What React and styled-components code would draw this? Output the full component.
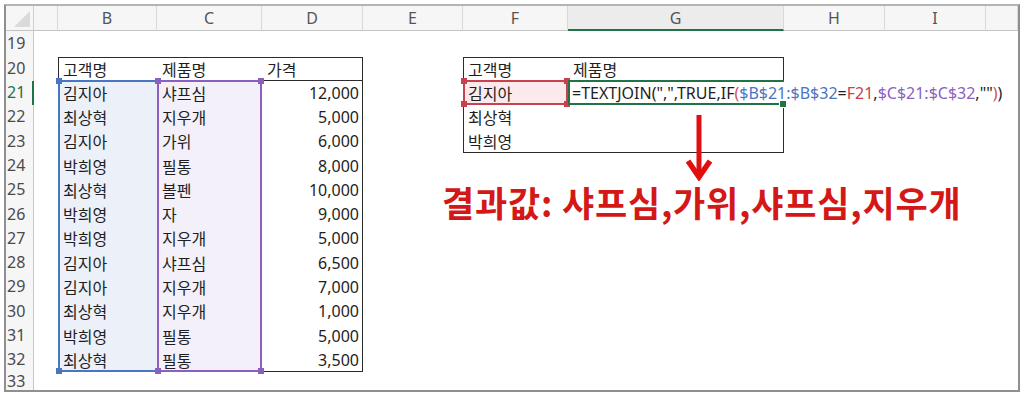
import React from "react";
import styled, { createGlobalStyle } from "styled-components";

const GlobalStyle = createGlobalStyle`
  html, body { margin: 0; padding: 0; background: #ffffff; }
  body { font-family: "Noto Sans CJK KR", "Noto Sans", sans-serif; }
  * { box-sizing: border-box; }
`;

const KR = `"Noto Sans", "Noto Sans CJK KR", sans-serif`;
const KRB = `"Noto Sans CJK KR", "Noto Sans", sans-serif`;
const HEAD = `"Noto Sans", "Open Sans", sans-serif`;

const Frame = styled.div`
  margin: 4px 0 0 4px;
  width: 1016px;
  height: 388px;
  border: 2px solid #8f8f8f;
  border-top-color: #b4b4b4;
  overflow: hidden;
  background: #ffffff;
`;

const Sheet = styled.div`
  position: relative;
  display: grid;
  grid-template-columns: 28px 24px 99px 105px 101px 100px 105px 216px 101px 101px 1fr;
  grid-template-rows: 25px 26px 23.5px repeat(12, 24.3px) 24.3px;
  width: 100%;
`;

const Corner = styled.div`
  grid-column: 1;
  grid-row: 1;
  position: relative;
  background: #f6f6f6;
  border-right: 1px solid #cfcfcf;
  border-bottom: 1px solid #c4c4c4;
  &::after {
    content: "";
    position: absolute;
    right: 3px;
    bottom: 3px;
    width: 0;
    height: 0;
    border-left: 16px solid transparent;
    border-bottom: 16px solid #dadada;
  }
`;

const ColHeader = styled.div`
  grid-row: 1;
  grid-column: ${(p) => p.$col};
  display: flex;
  align-items: center;
  justify-content: center;
  background: ${(p) => (p.$active ? "#ececec" : "#f6f6f6")};
  border-right: 1px solid #d9d9d9;
  border-bottom: ${(p) => (p.$active ? "2px solid #217346" : "1px solid #c4c4c4")};
  font-family: ${HEAD};
  font-size: 16px;
  color: #555555;
`;

const RowHeader = styled.div`
  grid-column: 1;
  grid-row: ${(p) => p.$row};
  display: flex;
  align-items: ${(p) => (p.$last ? "flex-start" : "center")};
  padding-left: 1px;
  background: #f6f6f6;
  border-right: ${(p) => (p.$active ? "2px solid #217346" : "1px solid #c8c8c8")};
  font-family: ${HEAD};
  font-size: 16px;
  line-height: 1.2;
  color: ${(p) => (p.$active ? "#217346" : "#4a4a4a")};
`;

const Cell = styled.div`
  grid-column: ${(p) => p.$col};
  grid-row: ${(p) => p.$row};
  position: relative;
  z-index: 4;
  display: flex;
  align-items: center;
  justify-content: ${(p) => (p.$right ? "flex-end" : "flex-start")};
  padding: ${(p) => (p.$right ? "0 4px 0 0" : "0 0 0 5px")};
  font-family: ${KR};
  font-size: 16px;
  color: #1e1e1e;
  white-space: nowrap;
  overflow: visible;
`;

const TableBox = styled.div`
  grid-column: ${(p) => p.$gc};
  grid-row: ${(p) => p.$gr};
  position: relative;
  z-index: 1;
  border: 1px solid #2b2b2b;
  ${(p) => (p.$only ? `border-width: 0 0 1px 0;` : "")}
`;

const RangeBox = styled.div`
  grid-column: ${(p) => p.$gc};
  grid-row: ${(p) => p.$gr};
  position: relative;
  z-index: 2;
  margin-top: -1px;
  background: ${(p) => p.$fill};
  border: 2px solid ${(p) => p.$color};
  ${(p) => (p.$noRight ? "border-right: none;" : "")}
`;

const Handle = styled.span`
  position: absolute;
  width: 6px;
  height: 6px;
  background: ${(p) => p.$color};
  ${(p) => (p.$h === "l" ? "left: -4px;" : "right: -4px;")}
  ${(p) => (p.$v === "t" ? "top: -4px;" : "bottom: -4px;")}
`;

const ActiveCell = styled.div`
  grid-column: ${(p) => p.$gc};
  grid-row: ${(p) => p.$gr};
  position: relative;
  z-index: 3;
  margin-top: -1px;
  background: #ffffff;
  border: 2px solid #217346;
  border-right: none;
`;

const FillHandle = styled.span`
  position: absolute;
  right: -3px;
  bottom: -5px;
  width: 6px;
  height: 6px;
  background: #217346;
  border: 1px solid #ffffff;
  box-sizing: content-box;
`;

const Formula = styled.div`
  grid-column: 8;
  grid-row: 4;
  position: relative;
  z-index: 5;
  display: flex;
  align-items: center;
  padding-left: 4px;
  font-family: ${HEAD};
  font-size: 16px;
  color: #1e1e1e;
  white-space: nowrap;
  overflow: visible;
`;

const Ref = styled.span`
  color: ${(p) => p.$color};
`;

const ArrowWrap = styled.div`
  grid-column: 8;
  grid-row: 5 / 8;
  position: relative;
  z-index: 6;
  padding: 10px 0 0 117px;
`;

const Result = styled.div`
  grid-column: 6 / 12;
  grid-row: 8 / 10;
  position: relative;
  z-index: 6;
  display: flex;
  align-items: center;
  padding-left: 79px;
  font-family: ${KRB};
  font-weight: 700;
  font-size: 35px;
  line-height: 1;
  color: #d41717;
  white-space: nowrap;
  letter-spacing: 0.8px;
`;

const COLS = ["A", "B", "C", "D", "E", "F", "G", "H", "I", ""];
const colLine = (letter) => 2 + "ABCDEFGHIJ".indexOf(letter);
const rowLine = (r) => r - 17;

const names = ["김지아", "최상혁", "김지아", "박희영", "최상혁", "박희영", "박희영", "김지아", "김지아", "최상혁", "박희영", "최상혁"];
const items = ["샤프심", "지우개", "가위", "필통", "볼펜", "자", "지우개", "샤프심", "지우개", "지우개", "필통", "필통"];
const prices = ["12,000", "5,000", "6,000", "8,000", "10,000", "9,000", "5,000", "6,500", "7,000", "1,000", "5,000", "3,500"];

const BLUE = "#4a75c2";
const PURPLE = "#8b5fbf";
const RED = "#c8414d";

function Handles({ color, corners }) {
  return corners.map((c) => <Handle key={c} $color={color} $h={c[1]} $v={c[0]} />);
}

export default function App() {
  const rows = [];
  for (let r = 19; r <= 33; r++) rows.push(r);

  return (
    <>
      <GlobalStyle />
      <Frame>
        <Sheet>
          <Corner />
          {COLS.map((c, i) => (
            <ColHeader key={i} $col={i + 2} $active={c === "G"}>
              {c === "A" ? "" : c}
            </ColHeader>
          ))}
          {rows.map((r) => (
            <RowHeader key={r} $row={rowLine(r)} $active={r === 21} $last={r === 33}>
              {r}
            </RowHeader>
          ))}

          <TableBox $gc={`${colLine("B")} / ${colLine("E")}`} $gr={`${rowLine(20)} / ${rowLine(33)}`} />
          <TableBox $only $gc={`${colLine("B")} / ${colLine("E")}`} $gr={`${rowLine(20)} / ${rowLine(21)}`} />
          <TableBox $gc={`${colLine("F")} / ${colLine("H")}`} $gr={`${rowLine(20)} / ${rowLine(24)}`} />
          <TableBox $only $gc={`${colLine("F")} / ${colLine("H")}`} $gr={`${rowLine(20)} / ${rowLine(21)}`} />

          <RangeBox $noRight $color={BLUE} $fill="#ebf0f9" $gc={`${colLine("B")} / ${colLine("C")}`} $gr={`${rowLine(21)} / ${rowLine(33)}`}>
            <Handles color={BLUE} corners={["tl", "bl"]} />
          </RangeBox>
          <RangeBox $color={PURPLE} $fill="#f4f0f9" $gc={`${colLine("C")} / ${colLine("D")}`} $gr={`${rowLine(21)} / ${rowLine(33)}`}>
            <Handles color={PURPLE} corners={["tl", "tr", "bl", "br"]} />
          </RangeBox>
          <RangeBox $color={RED} $fill="#fbe9eb" $gc={`${colLine("F")} / ${colLine("G")}`} $gr={`${rowLine(21)} / ${rowLine(22)}`}>
            <Handles color={RED} corners={["tl", "tr", "bl", "br"]} />
          </RangeBox>
          <ActiveCell $gc={`${colLine("G")} / ${colLine("H")}`} $gr={`${rowLine(21)} / ${rowLine(22)}`}>
            <FillHandle />
          </ActiveCell>

          <Cell $col={colLine("B")} $row={rowLine(20)}>고객명</Cell>
          <Cell $col={colLine("C")} $row={rowLine(20)}>제품명</Cell>
          <Cell $col={colLine("D")} $row={rowLine(20)}>가격</Cell>
          {names.map((n, i) => (
            <React.Fragment key={i}>
              <Cell $col={colLine("B")} $row={rowLine(21 + i)}>{n}</Cell>
              <Cell $col={colLine("C")} $row={rowLine(21 + i)}>{items[i]}</Cell>
              <Cell $right $col={colLine("D")} $row={rowLine(21 + i)}>{prices[i]}</Cell>
            </React.Fragment>
          ))}

          <Cell $col={colLine("F")} $row={rowLine(20)}>고객명</Cell>
          <Cell $col={colLine("G")} $row={rowLine(20)}>제품명</Cell>
          <Cell $col={colLine("F")} $row={rowLine(21)}>김지아</Cell>
          <Cell $col={colLine("F")} $row={rowLine(22)}>최상혁</Cell>
          <Cell $col={colLine("F")} $row={rowLine(23)}>박희영</Cell>

          <Formula>
            =TEXTJOIN(",",TRUE,IF<Ref $color="#cf4f63">(</Ref>
            <Ref $color={BLUE}>$B$21:$B$32</Ref>=<Ref $color={RED}>F21</Ref>,
            <Ref $color={PURPLE}>$C$21:$C$32</Ref>,""<Ref $color="#cf4f63">)</Ref>)
          </Formula>

          <ArrowWrap>
            <svg width="28" height="66" viewBox="0 0 28 66">
              <line x1="14" y1="0" x2="14" y2="60" stroke="#e01010" strokeWidth="5" />
              <polyline points="3,46 14,62 25,46" fill="none" stroke="#e01010" strokeWidth="5.5" strokeLinejoin="miter" />
            </svg>
          </ArrowWrap>

          <Result>결과값: 샤프심,가위,샤프심,지우개</Result>
        </Sheet>
      </Frame>
    </>
  );
}
